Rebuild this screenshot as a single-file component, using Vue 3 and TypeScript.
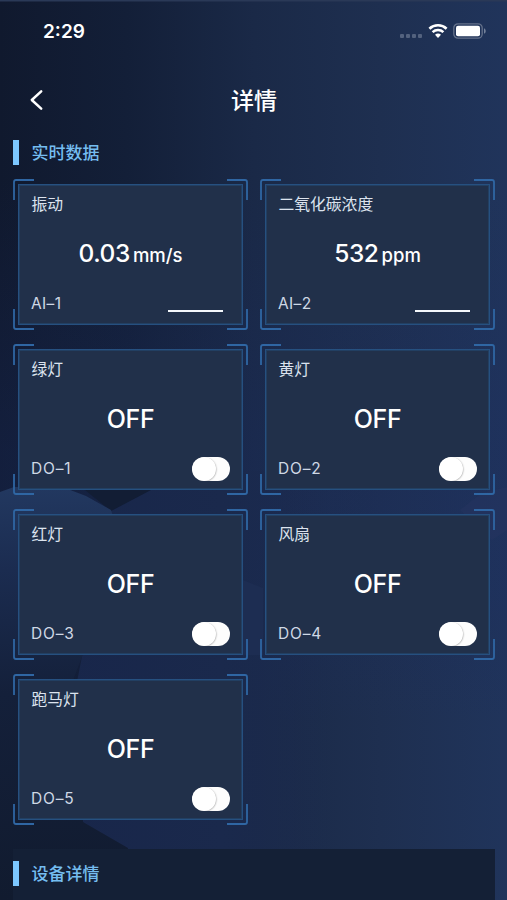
<script setup lang="ts">
interface Channel {
  name: string
  value: string
  unit?: string
  port: string
  kind: 'analog' | 'switch'
}

const channels: Channel[] = [
  { name: '振动', value: '0.03', unit: 'mm/s', port: 'AI–1', kind: 'analog' },
  { name: '二氧化碳浓度', value: '532', unit: 'ppm', port: 'AI–2', kind: 'analog' },
  { name: '绿灯', value: 'OFF', port: 'DO–1', kind: 'switch' },
  { name: '黄灯', value: 'OFF', port: 'DO–2', kind: 'switch' },
  { name: '红灯', value: 'OFF', port: 'DO–3', kind: 'switch' },
  { name: '风扇', value: 'OFF', port: 'DO–4', kind: 'switch' },
  { name: '跑马灯', value: 'OFF', port: 'DO–5', kind: 'switch' },
]
</script>

<template>
  <div class="screen">
    <svg class="backdrop" viewBox="0 0 507 900" aria-hidden="true">
      <defs>
        <linearGradient id="sky" x1="0" y1="0" x2="1" y2="0">
          <stop offset="0" stop-color="#10192e" />
          <stop offset="0.25" stop-color="#131f38" />
          <stop offset="0.5" stop-color="#1a2947" />
          <stop offset="0.75" stop-color="#1e2f50" />
          <stop offset="1" stop-color="#20345b" />
        </linearGradient>
        <linearGradient id="ridge" x1="0" y1="0" x2="0" y2="1">
          <stop offset="0" stop-color="#223860" />
          <stop offset="0.2" stop-color="#1b2c50" />
          <stop offset="0.5" stop-color="#14203a" />
          <stop offset="1" stop-color="#111b2f" />
        </linearGradient>
        <linearGradient id="slope" gradientUnits="userSpaceOnUse" x1="60" y1="0" x2="330" y2="0">
          <stop offset="0" stop-color="#18264a" />
          <stop offset="0.6" stop-color="#1a294c" />
          <stop offset="1" stop-color="#1b2a50" stop-opacity="0" />
        </linearGradient>
        <linearGradient id="haze" x1="0" y1="0" x2="0" y2="1">
          <stop offset="0.2" stop-color="#1b2c60" stop-opacity="0" />
          <stop offset="0.5" stop-color="#1b2c60" stop-opacity="0.3" />
          <stop offset="0.65" stop-color="#1b2c60" stop-opacity="0.3" />
          <stop offset="0.8" stop-color="#1b2c60" stop-opacity="0" />
        </linearGradient>
      </defs>
      <rect width="507" height="900" fill="url(#sky)" />
      <rect width="507" height="900" fill="url(#haze)" />
      <path d="M111 511l38-20 41-20 141 0v429H132l-49-78-20-70z" fill="url(#slope)" />
      <path d="M60 470h130l-41 21-38 20z" fill="#121d34" />
      <path d="M0 492l14-5 51 1 21 8 25 14 12 40-50 130 10 142 45 26v52H0z" fill="url(#ridge)" />
      <path d="M243 580l20 8v67h-20z" fill="#1d2d52" />
      <path d="M507 530l-15 10-32-30 22-17 25-6z" fill="#24335f" opacity="0.6" />
      <rect width="507" height="1.5" fill="#2a3957" />
    </svg>

    <header class="status">
      <span class="clock">2:29</span>
      <div class="indicators">
        <span class="cells"><i v-for="n in 4" :key="n" /></span>
        <svg class="wifi" viewBox="0 0 20 16" aria-hidden="true">
          <path d="M1.4 5.7a12.6 12.6 0 0 1 17.2 0M4.6 9.1a8 8 0 0 1 10.8 0" />
          <path class="dot" d="M10 15.1l-3-3.3a4.4 4.4 0 0 1 6 0z" />
        </svg>
        <svg class="battery" viewBox="0 0 33 16" aria-hidden="true">
          <rect class="shell" x="0.8" y="0.8" width="28.4" height="14.4" rx="4.2" />
          <rect class="charge" x="3" y="2.7" width="24" height="10.6" rx="2" />
          <path class="tip" d="M31 5.2c2.3 1 2.3 4.6 0 5.6z" />
        </svg>
      </div>
    </header>

    <nav class="nav">
      <button class="back" type="button">
        <svg viewBox="0 0 14 22" aria-hidden="true"><path d="M11.2 2.4L1.8 11l9.4 8.6" /></svg>
      </button>
      <h1>详情</h1>
    </nav>

    <section class="live">
      <h2><span>实时数据</span></h2>
      <div class="grid">
        <article v-for="c in channels" :key="c.port" class="card">
          <svg class="corners" viewBox="0 0 235 151" aria-hidden="true">
            <path d="M1 21V3q0-2 2-2h18M214 1h18q2 0 2 2v18M234 130v18q0 2-2 2h-18M21 150H3q-2 0-2-2v-18" />
          </svg>
          <div class="panel">
            <p class="name">{{ c.name }}</p>
            <p class="reading">
              <span :class="['value', c.kind]">{{ c.value }}</span><span v-if="c.unit" class="unit">{{ c.unit }}</span>
            </p>
            <div class="foot">
              <span :class="['port', c.kind]">{{ c.port }}</span>
              <span v-if="c.kind === 'analog'" class="trend" />
              <span v-else class="toggle"><span class="knob" /></span>
            </div>
          </div>
        </article>
      </div>
    </section>

    <section class="device">
      <h2><span>设备详情</span></h2>
    </section>
  </div>
</template>

<style>
body {
  margin: 0;
  background: #10192e;
}
</style>

<style scoped>
.screen {
  position: relative;
  box-sizing: border-box;
  width: 507px;
  height: 900px;
  overflow: hidden;
  display: flex;
  flex-direction: column;
  color: #fff;
  font-family: Inter, "Noto Sans CJK SC", sans-serif;
}
.backdrop {
  position: absolute;
  inset: 0;
  width: 507px;
  height: 900px;
}
.status,
.nav,
.live,
.device {
  position: relative;
}
h1,
h2,
p {
  margin: 0;
}
.status {
  box-sizing: border-box;
  flex: none;
  height: 66px;
  padding: 19px 21px 0 43px;
  display: flex;
  justify-content: space-between;
}
.clock {
  height: 24px;
  padding-top: 1px;
  font-size: 19px;
  line-height: 24px;
  font-weight: 600;
}
.indicators {
  display: flex;
  height: 24px;
  align-items: center;
}
.cells {
  display: flex;
  gap: 2px;
  margin: 10px 6px 0 0;
}
.cells i {
  width: 4px;
  height: 4px;
  border-radius: 1px;
  background: #53627e;
}
.wifi {
  width: 20px;
  height: 16px;
  margin-right: 5px;
  fill: none;
  stroke: #fff;
  stroke-width: 2.6;
}
.wifi .dot {
  fill: #fff;
  stroke: none;
}
.battery {
  width: 33px;
  height: 16px;
}
.shell {
  fill: none;
  stroke: #65728b;
  stroke-width: 1.3;
}
.charge {
  fill: #fff;
}
.tip {
  fill: #75829a;
}
.nav {
  flex: none;
  height: 68px;
  display: grid;
  grid-template-columns: 60px 1fr 60px;
  align-items: center;
}
.back {
  padding: 0 0 0 30px;
  border: 0;
  background: none;
  height: 22px;
}
.back svg {
  display: block;
  width: 14px;
  height: 22px;
  fill: none;
  stroke: #fff;
  stroke-width: 2.5;
  stroke-linecap: round;
  stroke-linejoin: round;
}
h1 {
  padding: 2px 0 0 1px;
  font-size: 23px;
  line-height: 34px;
  font-weight: 500;
  text-align: center;
}
h2 {
  display: flex;
  align-items: center;
  gap: 12.5px;
  height: 25px;
  font-size: 17px;
  line-height: 25px;
  font-weight: 500;
  color: #75bdf0;
}
h2::before {
  content: "";
  width: 6px;
  height: 25px;
  background: #7cc7ff;
}
h2 span {
  padding-top: 2px;
}
.live {
  flex: none;
  padding: 6px 12px 0 13px;
}
.grid {
  display: grid;
  grid-template-columns: 235px 235px;
  grid-auto-rows: 151px;
  gap: 14px 12px;
  margin-top: 14px;
}
.card {
  position: relative;
  box-sizing: border-box;
  padding: 5px;
}
.corners {
  position: absolute;
  inset: 0;
  width: 235px;
  height: 151px;
  fill: none;
  stroke: #2f66a3;
  stroke-width: 1.8;
}
.panel {
  box-sizing: border-box;
  height: 141px;
  padding: 8px 12px 5px;
  border: 1px solid #265080;
  box-shadow: inset 0 0 0 1px #223f62;
  background: #21304a;
  display: flex;
  flex-direction: column;
}
.name {
  height: 24px;
  padding-left: 0.4px;
  font-size: 15.8px;
  line-height: 24px;
  color: #dce3ee;
}
.reading {
  display: flex;
  justify-content: center;
  align-items: baseline;
  gap: 3px;
  height: 36px;
  margin-top: 18px;
  line-height: 36px;
  font-weight: 500;
}
.value {
  font-size: 24.5px;
  letter-spacing: -0.4px;
}
.value.switch {
  margin-top: 1px;
  font-size: 25px;
  letter-spacing: -0.4px;
}
.unit {
  font-size: 18.5px;
}
.foot {
  display: flex;
  justify-content: space-between;
  align-items: center;
  height: 26px;
  margin-top: 20px;
}
.port {
  margin-top: -1px;
  font-size: 15.5px;
  letter-spacing: 0.35px;
  color: #cfd8e5;
}
.port.switch {
  letter-spacing: 0.8px;
}
.trend {
  width: 55px;
  height: 2px;
  margin: 14px 7px 0 0;
  background: #f4f7fb;
}
.toggle {
  width: 38px;
  height: 24px;
  border-radius: 12px;
  background: #fdfdfd;
  overflow: hidden;
}
.knob {
  display: block;
  width: 24px;
  height: 24px;
  border-radius: 50%;
  background: #fff;
  box-shadow: 0.5px 0.5px 1.5px rgba(0, 0, 0, 0.3);
}
.device {
  flex: 1;
  margin: 24px 12px 0 13px;
  padding-top: 12px;
  background: #142036;
}
</style>
